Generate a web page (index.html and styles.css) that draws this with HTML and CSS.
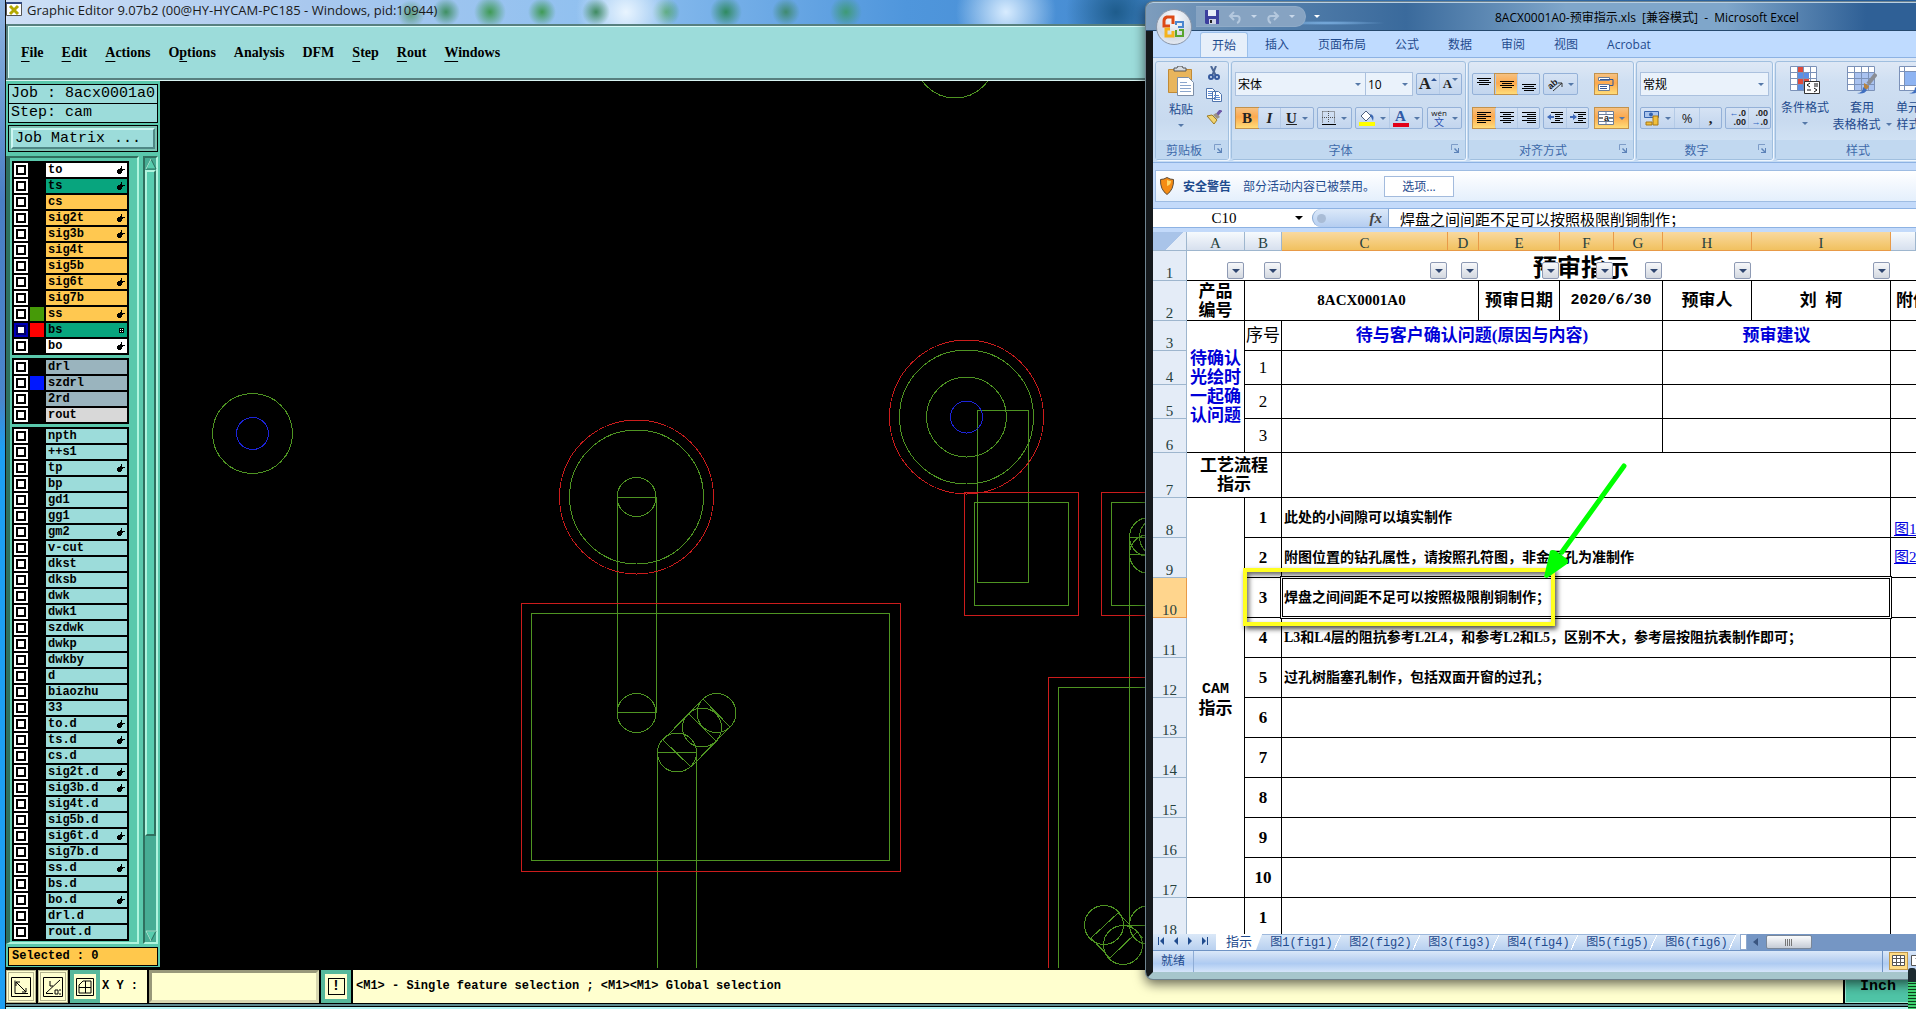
FILE: index.html
```html
<!DOCTYPE html>
<html lang="zh-CN">
<head>
    <meta charset="UTF-8">
    <meta name="viewport" content="width=device-width, initial-scale=1.0">
    <title>Graphic Editor</title>
    <link rel="stylesheet" href="styles.css">
</head>
<body>
    <svg class="defs" width="0" height="0">
        <symbol id="hand" viewBox="0 0 8 8"><path d="M0 4h1v-1h2v-1h1v-2h1v3h3v1h-2v1h-1v2h-1v1h-3v-1h-1z"/></symbol>
        <symbol id="grid" viewBox="0 0 8 8"><path fill="#fff" d="M2 2h5v5h-5z"/><path fill="none" stroke="#000" d="M2.500 2.500h4v4h-4zM4.500 2v5M2 4.500h5"/></symbol>
        <symbol id="launch" viewBox="0 0 9 9"><path fill="none" stroke="#7d9cc8" d="M.5 6V.5H7"/><path fill="#5d83b8" d="M4 4l3 3V4h1v5H3V8h3L3 5z"/></symbol>
    </svg>

    <div class="editor">
        <header class="editor-title">
            <svg width="16" height="16" viewBox="0 0 16 16"><path fill="#fff" stroke="#555" d="M.5.5h15v13H.5z"/><path fill="#334a80" d="M0 0h16v2H0z"/><path stroke="#b3a800" stroke-width="3" d="M4 4l8 8M12 4l-8 8"/></svg>
            <span>Graphic Editor 9.07b2 (00@HY-HYCAM-PC185 - Windows, pid:10944)</span>
        </header>
        <nav class="menubar">
            <button><u>F</u>ile</button>
            <button><u>E</u>dit</button>
            <button><u>A</u>ctions</button>
            <button>O<u>p</u>tions</button>
            <button>Analysis</button>
            <button>DFM</button>
            <button><u>S</u>tep</button>
            <button><u>R</u>out</button>
            <button><u>W</u>indows</button>
        </nav>
        <div class="workspace">
            <aside class="sidebar">
                <div class="job-info">
                    <div>Job : 8acx0001a0</div>
                    <div>Step: cam</div>
                </div>
                <div class="matrix"><button>Job Matrix ...</button></div>
                <div class="layer-panel">
                    <div class="layers" id="layers"></div>
                    <div class="scrollbar">
                        <svg width="12" height="12" viewBox="0 0 12 12"><path fill="#58cdae" stroke="#2b6c5c" d="M6 1l5 10H1z"/><path stroke="#b0f4de" d="M6 1L1 11"/></svg>
                        <div class="thumb"></div>
                        <svg width="12" height="12" viewBox="0 0 12 12"><path fill="#58cdae" stroke="#2b6c5c" d="M1 1h10L6 11z"/><path stroke="#b0f4de" d="M1 1h10M1 1l5 10"/></svg>
                    </div>
                </div>
                <div class="selected">Selected : 0</div>
            </aside>
            <main class="canvas">
                <svg width="100%" height="100%">
                    <g transform="translate(-160 -82)" fill="none" shape-rendering="crispEdges">
                        <g class="green">
                            <circle cx="955" cy="59" r="40"/>
                            <circle cx="252.5" cy="434.5" r="40"/>
                            <circle cx="636.5" cy="498" r="67"/>
                            <circle cx="636.5" cy="498" r="19.5"/>
                            <circle cx="636.5" cy="714" r="19.5"/>
                            <path d="M617.5 498.5H656.5M617.5 498V714M656.5 498V714M617.5 713.5H656.5"/>
                            <path d="M531.5 614.5H889.5V861.5H531.5z"/>
                            <circle cx="677" cy="753.5" r="19.5"/>
                            <circle cx="702" cy="728.5" r="19.5"/>
                            <circle cx="716.5" cy="714" r="19.5"/>
                            <path d="M657.5 970V753.5H696.5V970M663 741L691 768M688 714L716 742M703 700L730 728M663 741L703 700M691 768L730 728"/>
                            <circle cx="966.5" cy="418" r="67"/>
                            <circle cx="966.5" cy="418" r="40"/>
                            <path d="M977.5 411.5H1028.5V583.5H977.5z"/>
                            <path d="M974.5 503.5H1068.5V606.5H974.5zM1160 503.5H1111.5V606.5H1160"/>
                            <circle cx="1149" cy="538" r="19.5"/>
                            <circle cx="1149" cy="555" r="19.5"/>
                            <circle cx="1159" cy="538" r="19.5"/>
                            <path d="M1129.5 538V930M1129 538.5H1160M1129 555.5H1160"/>
                            <path d="M1160 688.5H1058.5V970"/>
                            <circle cx="1104" cy="926" r="19.5"/>
                            <circle cx="1123" cy="946" r="19.5"/>
                            <circle cx="1149" cy="926" r="19.5"/>
                            <path d="M1091 939L1118 914M1110 959L1137 933M1091 939L1110 959M1118 914L1143 939M1123 926.5H1160"/>
                        </g>
                        <g class="red">
                            <circle cx="636.5" cy="498" r="77"/>
                            <circle cx="966.5" cy="418" r="77"/>
                            <path d="M521.5 604.5H900.5V872.5H521.5z"/>
                            <path d="M964.5 493.5H1078.5V616.5H964.5zM1160 493.5H1101.5V616.5H1160M1160 678.5H1048.5V970"/>
                        </g>
                        <g class="blue">
                            <circle cx="252.5" cy="434.5" r="16"/>
                            <circle cx="966.5" cy="418" r="16"/>
                        </g>
                    </g>
                </svg>
            </main>
        </div>
        <footer class="command-bar">
            <button class="tool" aria-label="Zoom">
                <svg width="20" height="20" viewBox="0 0 20 20"><path d="M.5.5h19v19H.5zM4 3.500V16.500H17M5 5L15 15M5 9V5h4M15 11v4h-4"/></svg>
            </button>
            <button class="tool" aria-label="Angle">
                <svg width="20" height="20" viewBox="0 0 20 20"><path d="M.5.5h19v19H.5zM3 16.500H10M3 16L17 3M7 4v5h3M12 13h3v4h-3zM16 17h2M16 13h2"/></svg>
            </button>
            <button class="tool on" aria-label="Grid">
                <svg width="18" height="18" viewBox="0 0 18 18"><path d="M.5.5h17v17H.5zM3 7L7 3h8v12H3zM3 9.500h12M9.500 3v12"/></svg>
            </button>
            <label for="xy">X Y :</label>
            <input type="text" id="xy">
            <button class="tool on bang" aria-label="Alert"><span>!</span></button>
            <div class="hint">&lt;M1&gt; - Single feature selection ; &lt;M1&gt;&lt;M1&gt; Global selection</div>
            <button class="unit">Inch</button>
        </footer>
    </div>

    <section class="excel">
        <header class="excel-title">
            <div class="quick">
                <svg width="14" height="14" viewBox="0 0 14 14"><path fill="#3c3f9e" d="M0 0h14v14H1l-1-1z"/><path fill="#e9edf8" d="M3 0h8v6H3z"/><path fill="#cfd4e6" d="M4 9h7v5H4z"/><path fill="#222" d="M5 10h2v3H5z"/></svg>
                <svg width="14" height="14" viewBox="0 0 14 14"><path fill="none" stroke="#b4c8de" stroke-width="2" d="M2 6h7c4 0 3 6 0 7M6 2L2 6l4 4"/></svg>
                <i class="caret pale"></i>
                <svg width="14" height="14" viewBox="0 0 14 14"><path fill="none" stroke="#b4c8de" stroke-width="2" d="M12 6H5c-4 0-3 6 0 7M8 2l4 4-4 4"/></svg>
                <i class="caret pale"></i>
            </div>
            <i class="caret white"></i>
            <h1>8ACX0001A0-预审指示.xls&nbsp; [兼容模式] &nbsp;- &nbsp;Microsoft Excel</h1>
        </header>
        <button class="office" aria-label="Office">
            <svg width="24" height="24" viewBox="0 0 24 24" fill="none" stroke-width="3">
                <path stroke="#dd4a16" d="M11 9V2H5Q2 3 2 6v5h6"/>
                <path stroke="#4b86cf" stroke-width="2" d="M14 10V7h7v5h-5"/>
                <path stroke="#f5b31c" d="M8 14H4v7h7v-5"/>
                <path stroke="#58a52f" stroke-width="2" d="M14 15v6h7v-6h-4"/>
            </svg>
        </button>

        <nav class="ribbon-tabs">
            <button class="active">开始</button>
            <button>插入</button>
            <button>页面布局</button>
            <button>公式</button>
            <button>数据</button>
            <button>审阅</button>
            <button>视图</button>
            <button>Acrobat</button>
        </nav>

        <div class="ribbon">
            <div class="group clipboard">
                <div class="tools">
                    <button class="big">
                        <svg width="26" height="30" viewBox="0 0 26 30"><path fill="#e8b55c" stroke="#c18a35" d="M.5 3.500h23v23h-23z"/><path fill="#d7dce2" stroke="#555" d="M6 5V2h3l1-2h4l1 2h3v3z"/><path fill="#fff" stroke="#7d8fa8" d="M9.500 11.500h11l5 5v13h-16z"/><path stroke="#8ca6cc" d="M12 16.500h7M12 19.500h11M12 22.500h11M12 25.500h11"/></svg>
                        <span>粘贴</span>
                        <i class="caret"></i>
                    </button>
                    <div class="small-tools">
                        <button aria-label="剪切"><svg width="14" height="15" viewBox="0 0 14 15"><path fill="none" stroke="#4d6897" stroke-width="2" d="M4 0l5 10M9 0L5 10"/><circle cx="4" cy="11" r="2" fill="none" stroke="#35599d" stroke-width="2"/><circle cx="10" cy="11" r="2" fill="none" stroke="#35599d" stroke-width="2"/></svg></button>
                        <button aria-label="复制"><svg width="16" height="14" viewBox="0 0 16 14"><path fill="#fff" stroke="#4f74ad" d="M.5.5h6l3 3v7h-9zM6.500 3.500h6l3 3v7h-9z"/><path stroke="#5f8bd0" d="M2 3.500h4M2 5.500h4M2 7.500h4M8 7.500h5M8 9.500h6M8 11.500h6"/></svg></button>
                        <button aria-label="格式刷"><svg width="16" height="15" viewBox="0 0 16 15"><path stroke="#6e5aa6" stroke-width="3" d="M15 0l-4 5"/><path fill="#9c9284" d="M7 5l3-2 4 4-3 2z"/><path fill="#f1d470" stroke="#9f7c22" d="M1 6l5-1 5 5-3 4z"/></svg></button>
                    </div>
                </div>
                <div class="caption">剪贴板<svg width="9" height="9"><use href="#launch"/></svg></div>
            </div>

            <div class="group font">
                <div class="tools rows">
                    <div class="row">
                        <label class="combo face"><select aria-label="字体"><option>宋体</option></select></label>
                        <label class="combo size"><select aria-label="字号"><option>10</option></select></label>
                        <div class="set end">
                            <button class="serif grow">A<i class="up"></i></button>
                            <button class="serif shrink">A<i class="caret"></i></button>
                        </div>
                    </div>
                    <div class="row">
                        <div class="set">
                            <button class="serif on">B</button>
                            <button class="serif italic">I</button>
                            <button class="serif wide"><u>U</u><i class="caret"></i></button>
                        </div>
                        <div class="set">
                            <button class="wide"><svg width="14" height="14" viewBox="0 0 14 14"><path fill="none" stroke="#555" stroke-dasharray="1 1" d="M.5.5h12v12M.5.5v12M6.500 0v12M0 6.500h13"/><path stroke="#000" d="M0 13.500h14"/></svg><i class="caret"></i></button>
                        </div>
                        <div class="set">
                            <button class="wide"><svg width="16" height="16" viewBox="0 0 16 16"><path fill="#fff" stroke="#4c5f80" d="M2 6l5-5 5 5-5 5z"/><path fill="#3b68b4" d="M11 4q5 1 3 7l-2-4z"/><path fill="#ffff00" d="M0 12h16v4H0z"/></svg><i class="caret"></i></button>
                            <button class="wide"><span class="font-color">A</span><i class="caret"></i></button>
                        </div>
                        <div class="set end">
                            <button class="wide"><span class="pinyin"><small>wén</small><span>文</span></span><i class="caret"></i></button>
                        </div>
                    </div>
                </div>
                <div class="caption">字体<svg width="9" height="9"><use href="#launch"/></svg></div>
            </div>

            <div class="group align">
                <div class="tools rows">
                    <div class="row">
                        <div class="set">
                            <button aria-label="顶端对齐"><svg width="14" height="14" viewBox="0 0 14 14"><path stroke="#000" d="M0 1.500h14M2 3.500h10M0 5.500h14M2 7.500h10"/></svg></button>
                            <button class="on" aria-label="垂直居中"><svg width="14" height="14" viewBox="0 0 14 14"><path stroke="#000" d="M0 4.500h14M2 6.500h10M0 8.500h14M2 10.500h10"/></svg></button>
                            <button aria-label="底端对齐"><svg width="14" height="14" viewBox="0 0 14 14"><path stroke="#000" d="M0 7.500h14M2 9.500h10M0 11.500h14M2 13.500h10"/></svg></button>
                        </div>
                        <div class="set">
                            <button class="wide" aria-label="方向"><svg width="15" height="15" viewBox="0 0 15 15"><text x="0" y="10" class="ab" transform="rotate(-40 5 8)">ab</text><path fill="none" stroke="#333" d="M5 14l9-8M10 6h4v4"/></svg><i class="caret"></i></button>
                        </div>
                        <div class="set alone">
                            <button class="on" aria-label="自动换行"><svg width="16" height="16" viewBox="0 0 16 16"><path fill="#fff" stroke="#6c7d98" d="M.5 1.500h11v3H.5zM.5 8.500h11v6H.5z"/><path fill="none" stroke="#2f5597" d="M2 3.500h13v6h-4M2 10.500h7M2 12.500h7"/></svg></button>
                        </div>
                    </div>
                    <div class="row">
                        <div class="set">
                            <button class="on" aria-label="左对齐"><svg width="14" height="14" viewBox="0 0 14 14"><path stroke="#000" d="M0 1.500h14M0 3.500h9M0 5.500h14M0 7.500h9M0 9.500h14M0 11.500h9"/></svg></button>
                            <button aria-label="居中"><svg width="14" height="14" viewBox="0 0 14 14"><path stroke="#000" d="M0 1.500h14M3 3.500h8M0 5.500h14M3 7.500h8M0 9.500h14M3 11.500h8"/></svg></button>
                            <button aria-label="右对齐"><svg width="14" height="14" viewBox="0 0 14 14"><path stroke="#000" d="M0 1.500h14M5 3.500h9M0 5.500h14M5 7.500h9M0 9.500h14M5 11.500h9"/></svg></button>
                        </div>
                        <div class="set">
                            <button aria-label="减少缩进"><svg width="16" height="14" viewBox="0 0 16 14"><path stroke="#000" d="M4 1.500h12M8 3.500h8M8 5.500h5M8 7.500h8M8 9.500h5M4 11.500h12"/><path fill="#3f69b8" d="M0 6l4-3v2h3v2H4v2z"/></svg></button>
                            <button aria-label="增加缩进"><svg width="16" height="14" viewBox="0 0 16 14"><path stroke="#000" d="M4 1.500h12M8 3.500h8M8 5.500h5M8 7.500h8M8 9.500h5M4 11.500h12"/><path fill="#3f69b8" d="M7 6L3 3v2H0v2h3v2z"/></svg></button>
                        </div>
                        <div class="set alone">
                            <button class="on wide" aria-label="合并后居中"><svg width="16" height="14" viewBox="0 0 16 14"><path fill="#fff" stroke="#6c7d98" d="M.5.5h15v13H.5zM0 3.500h16M0 10.500h16M8 0v4M8 10v4"/><path stroke="#000" d="M1 7h4M11 7h4"/><text x="6" y="10" class="ab">a</text></svg><i class="caret"></i></button>
                        </div>
                    </div>
                </div>
                <div class="caption">对齐方式<svg width="9" height="9"><use href="#launch"/></svg></div>
            </div>

            <div class="group number">
                <div class="tools rows">
                    <div class="row">
                        <label class="combo format"><select aria-label="数字格式"><option>常规</option></select></label>
                    </div>
                    <div class="row">
                        <div class="set">
                            <button class="wide" aria-label="会计数字格式"><svg width="16" height="16" viewBox="0 0 16 16"><path fill="#a9c4ec" stroke="#3563ad" d="M.5 1.500h14v6H.5z"/><circle cx="7" cy="4.500" r="2" fill="#3563ad"/><path fill="#f0bf3c" stroke="#a97812" d="M9 6h5v9H9zM2 12h6v3H2z"/></svg><i class="caret"></i></button>
                            <button class="percent">%</button>
                            <button class="serif">,</button>
                        </div>
                        <div class="set end">
                            <button class="decimals"><span><b>←</b>.0</span><span>.00</span></button>
                            <button class="decimals"><span>.00</span><span><b>→</b>.0</span></button>
                        </div>
                    </div>
                </div>
                <div class="caption">数字<svg width="9" height="9"><use href="#launch"/></svg></div>
            </div>

            <div class="group styles">
                <div class="tools">
                    <button class="big">
                        <svg width="30" height="28" viewBox="0 0 30 28"><path fill="#fff" d="M0 0h27v24H0z"/><path fill="#e04a3c" d="M7 0h7v6H7zM7 12h12v6H7z"/><path fill="#5b8fe6" d="M7 6h12v6H7zM7 18h7v6H7z"/><path fill="none" stroke="#7b91b8" d="M.5.5h26v24H.5zM0 6.500h27M0 12.500h27M0 18.500h27M7.500 0v24M13.500 0v24M20.500 0v24"/><path fill="#fff" stroke="#333" d="M14.500 15.500h15v12h-15z"/><path fill="none" stroke="#111" d="M20 17l-3 2 3 2M17 24h4M24 18h4M24 20h4M24 22l3 2-3 2"/></svg>
                        <span>条件格式</span>
                        <i class="caret"></i>
                    </button>
                    <button class="big table-style">
                        <svg width="30" height="28" viewBox="0 0 30 28"><path fill="#fff" d="M0 0h28v24H0z"/><path fill="#a9c2f0" d="M7 6h21v18H7z"/><path fill="none" stroke="#7b91b8" d="M.5.5h27v24H.5zM0 6.500h28M0 12.500h28M0 18.500h28M7.500 0v24M14.500 0v24M21.500 0v24"/><path stroke="#8a8d94" stroke-width="4" d="M29 8l-8 10"/><path fill="#b98440" d="M17 17l5 3q-1 4-5 4z"/><path fill="#3f6fc0" d="M10 27q6 0 6-6l4 3q-3 5-10 3z"/></svg>
                        <span>套用</span>
                        <span class="second">表格格式<i class="caret"></i></span>
                    </button>
                    <button class="big cell-style">
                        <svg width="30" height="28" viewBox="0 0 30 28"><path fill="#fff" stroke="#7b91b8" d="M.5.5h29v24H.5z"/><path fill="#8eb4f2" d="M6 6h24v13H6z"/><path stroke="#7b91b8" d="M0 5.500h30M5.500 0v24M0 19.500h30"/><path fill="#3f6fc0" d="M10 27q6 0 6-6l4 3q-3 5-10 3z"/></svg>
                        <span>单元格</span>
                        <span class="second">样式<i class="caret"></i></span>
                    </button>
                </div>
                <div class="caption">样式</div>
            </div>
        </div>

        <div class="warning">
            <svg width="14" height="18" viewBox="0 0 14 18"><path fill="#f58c14" stroke="#5c4a36" d="M7 .5q3 2 6.500 2 .5 10-6.500 15Q0 12.500.5 2.500q3.500 0 6.500-2z"/><path fill="#ffd766" d="M7 3q2 1 4 1 0 4-4 5z"/></svg>
            <strong>安全警告</strong>
            <span>部分活动内容已被禁用。</span>
            <button>选项...</button>
        </div>

        <div class="formula-bar">
            <div class="name-box"><span>C10</span><i class="caret"></i></div>
            <div class="fx"><i class="knob"></i><em>fx</em></div>
            <input type="text" aria-label="编辑栏" value="焊盘之间间距不足可以按照极限削铜制作；">
        </div>

        <div class="sheet">
            <table>
                <colgroup>
                    <col class="w-head"><col class="w-a"><col class="w-b"><col class="w-c"><col class="w-d"><col class="w-e">
                    <col class="w-f"><col class="w-g"><col class="w-h"><col class="w-i"><col>
                </colgroup>
                <thead>
                    <tr>
                        <th class="corner"></th><th>A</th><th>B</th><th class="hot">C</th><th class="hot">D</th><th class="hot">E</th>
                        <th class="hot">F</th><th class="hot">G</th><th class="hot">H</th><th class="hot">I</th><th></th>
                    </tr>
                </thead>
                <tbody>
                    <tr class="r30 filters">
                        <th>1</th>
                        <td><button aria-label="筛选 A"></button></td>
                        <td><button aria-label="筛选 B"></button></td>
                        <td><button aria-label="筛选 C"></button></td>
                        <td><button aria-label="筛选 D"></button></td>
                        <td><span class="sheet-title">预审指示</span><button aria-label="筛选 E"></button></td>
                        <td><button aria-label="筛选 F"></button></td>
                        <td><button aria-label="筛选 G"></button></td>
                        <td><button aria-label="筛选 H"></button></td>
                        <td><button aria-label="筛选 I"></button></td>
                        <td></td>
                    </tr>
                    <tr class="r40 bold">
                        <th>2</th>
                        <td>产品<br>编号</td>
                        <td colspan="3" class="code">8ACX0001A0</td>
                        <td>预审日期</td>
                        <td colspan="2" class="date">2020/6/30</td>
                        <td>预审人</td>
                        <td>刘 &nbsp;柯</td>
                        <td class="left">附件</td>
                    </tr>
                    <tr class="r30">
                        <th>3</th>
                        <td rowspan="4" class="blue">待确认<br>光绘时<br>一起确<br>认问题</td>
                        <td>序号</td>
                        <td colspan="5" class="blue">待与客户确认问题(原因与内容)</td>
                        <td colspan="2" class="blue">预审建议</td>
                        <td></td>
                    </tr>
                    <tr class="r34"><th>4</th><td>1</td><td colspan="5"></td><td colspan="2"></td><td></td></tr>
                    <tr class="r34"><th>5</th><td>2</td><td colspan="5"></td><td colspan="2"></td><td></td></tr>
                    <tr class="r34"><th>6</th><td>3</td><td colspan="5"></td><td colspan="2"></td><td></td></tr>
                    <tr class="r45 bold"><th>7</th><td colspan="2">工艺流程<br>指示</td><td colspan="7"></td><td></td></tr>
                    <tr class="r40 bold">
                        <th>8</th>
                        <td rowspan="10"><span class="cam">CAM</span><br>指示</td>
                        <td>1</td>
                        <td colspan="7" class="note">此处的小间隙可以填实制作</td>
                        <td class="link low"><a href="#fig1">图1</a></td>
                    </tr>
                    <tr class="r40 bold"><th>9</th><td>2</td><td colspan="7" class="note">附图位置的钻孔属性，请按照孔符图，非金属孔为准制作</td><td class="link"><a href="#fig2">图2</a></td></tr>
                    <tr class="r40 bold"><th class="hot">10</th><td>3</td><td colspan="7" class="note current">焊盘之间间距不足可以按照极限削铜制作；</td><td></td></tr>
                    <tr class="r40 bold"><th>11</th><td>4</td><td colspan="7" class="note">L3和L4层的阻抗参考L2L4，和参考L2和L5，区别不大，参考层按阻抗表制作即可；</td><td></td></tr>
                    <tr class="r40 bold"><th>12</th><td>5</td><td colspan="7" class="note">过孔树脂塞孔制作，包括双面开窗的过孔；</td><td></td></tr>
                    <tr class="r40 bold"><th>13</th><td>6</td><td colspan="7"></td><td></td></tr>
                    <tr class="r40 bold"><th>14</th><td>7</td><td colspan="7"></td><td></td></tr>
                    <tr class="r40 bold"><th>15</th><td>8</td><td colspan="7"></td><td></td></tr>
                    <tr class="r40 bold"><th>16</th><td>9</td><td colspan="7"></td><td></td></tr>
                    <tr class="r40 bold"><th>17</th><td>10</td><td colspan="7"></td><td></td></tr>
                    <tr class="r40 bold"><th>18</th><td></td><td>1</td><td colspan="7"></td><td></td></tr>
                </tbody>
            </table>
        </div>

        <div class="sheet-tabs">
            <div class="tab-nav">
                <svg width="56" height="9" viewBox="0 0 56 9"><path fill="#1f4b8e" d="M1 0h1v8H1zM7 0v8L3 4zM21 0v8L17 4zM31 0v8l4-4zM45 0v8l4-4zM50 0h1v8h-1z"/></svg>
            </div>
            <button class="active">指示</button>
            <button>图1(fig1)</button>
            <button>图2(fig2)</button>
            <button>图3(fig3)</button>
            <button>图4(fig4)</button>
            <button>图5(fig5)</button>
            <button>图6(fig6)</button>
            <div class="splitter"></div>
            <div class="h-track">
                <i class="arrow-left"></i>
                <div class="h-thumb"><svg width="8" height="7" viewBox="0 0 8 7"><path stroke="#777" d="M.5 0v7M2.500 0v7M4.500 0v7M6.500 0v7"/></svg></div>
            </div>
        </div>
        <div class="status">
            <span>就绪</span>
            <div class="views">
                <button class="on" aria-label="普通"><svg width="13" height="11" viewBox="0 0 13 11"><path fill="#fff" stroke="#555" d="M.5.5h12v10H.5zM0 3.500h13M0 7.500h13M4.500 0v11M8.500 0v11"/></svg></button>
                <button aria-label="页面布局"><svg width="13" height="11" viewBox="0 0 13 11"><path fill="#fff" stroke="#555" d="M.5.5h12v10H.5zM4.500 3.500h5v7"/></svg></button>
            </div>
        </div>
    </section>

    <!-- mark-up drawn over the sheet -->
    <div class="mark-box"></div>
    <svg class="mark-arrow" width="90" height="120" viewBox="0 0 90 120">
        <path stroke="#00ff00" stroke-width="5" stroke-linecap="round" d="M84 6L22 92"/>
        <path fill="#00ff00" d="M4 117L10 91q2-2 6 0l11 8q2 3 0 5L7 118z"/>
    </svg>
    <div class="meter"></div>

    <script>
        // name, tone, swatch, marker
        const groups = [
            [
                ['to', 'white', '', 'hand'], ['ts', 'teal', '', 'hand'], ['cs', 'amber'],
                ['sig2t', 'amber', '', 'hand'], ['sig3b', 'amber', '', 'hand'], ['sig4t', 'amber'],
                ['sig5b', 'amber'], ['sig6t', 'amber', '', 'hand'], ['sig7b', 'amber'],
                ['ss', 'amber', 'green', 'hand'], ['bs', 'teal', 'red', 'grid'], ['bo', 'white', '', 'hand']
            ],
            [
                ['drl', 'slate'], ['szdrl', 'slate', 'blue'], ['2rd', 'slate'], ['rout', 'gray']
            ],
            [
                ['npth'], ['++s1'], ['tp', '', '', 'hand'], ['bp'], ['gd1'], ['gg1'], ['gm2', '', '', 'hand'],
                ['v-cut'], ['dkst'], ['dksb'], ['dwk'], ['dwk1'], ['szdwk'], ['dwkp'], ['dwkby'], ['d'],
                ['biaozhu'], ['33'], ['to.d', '', '', 'hand'], ['ts.d', '', '', 'hand'], ['cs.d'],
                ['sig2t.d', '', '', 'hand'], ['sig3b.d', '', '', 'hand'], ['sig4t.d'], ['sig5b.d'],
                ['sig6t.d', '', '', 'hand'], ['sig7b.d'], ['ss.d', '', '', 'hand'], ['bs.d'],
                ['bo.d', '', '', 'hand'], ['drl.d'], ['rout.d']
            ]
        ];

        document.getElementById('layers').innerHTML = groups.map(group => `
            <div class="layer-group">
                ${group.map(([name, tone = '', swatch = '', marker = '']) => `
                    <label class="layer ${tone && 'tone-' + tone}">
                        <input type="checkbox" ${name === 'bs' ? 'class="work"' : ''}>
                        <i class="${swatch && 'swatch-' + swatch}"></i>
                        <span>${name}${marker ? `<svg width="8" height="8"><use href="#${marker}"/></svg>` : ''}</span>
                    </label>
                `).join('')}
            </div>
        `).join('');
    </script>
</body>
</html>
```
FILE: styles.css
```css
* {
    box-sizing: border-box;
}
body {
    margin: 0;
    height: 100vh;
    overflow: hidden;
    position: relative;
    background: linear-gradient(#8fb4e0 0, #4a7fc4 200px, #4a86cc 400px, #1ea0f4 450px);
    font-family: "Open Sans", "Noto Sans CJK SC", sans-serif;
    font-size: 12px;
}
button {
    font: inherit;
    color: inherit;
    background: none;
    border: 0;
    padding: 0;
    margin: 0;
    cursor: pointer;
}
.defs {
    position: absolute;
}

/* graphic editor */
.editor {
    height: 100%;
    margin-left: 5px;
    display: flex;
    flex-direction: column;
    border-left: 1px solid #111;
    background: #000;
}
.editor-title {
    flex: none;
    height: 24px;
    display: flex;
    align-items: center;
    gap: 5px;
    padding-bottom: 4px;
    font-size: 13px;
    color: #1a1a1a;
    background:
        radial-gradient(circle at 405px 14px, #5f9f80 0, transparent 14px),
        radial-gradient(circle at 440px 12px, #3f8f62 0, transparent 14px),
        radial-gradient(circle at 484px 12px, #3f9a55 0, transparent 16px),
        radial-gradient(circle at 536px 12px, #3f9a55 0, transparent 14px),
        radial-gradient(circle at 590px 12px, #3f8a60 0, transparent 14px),
        radial-gradient(circle at 620px 12px, #e8f4ff 0, transparent 50px),
        radial-gradient(circle at 660px 12px, #3f9a66 0, transparent 14px),
        radial-gradient(circle at 720px 12px, #2f8a60 0, transparent 16px),
        radial-gradient(circle at 780px 12px, #3f8a70 0, transparent 14px),
        radial-gradient(circle at 840px 12px, #3e9a76 0, transparent 16px),
        radial-gradient(circle at 1000px 12px, #d8ecff 0, transparent 50px),
        radial-gradient(circle at 1110px 12px, #1e5c8c 0, transparent 50px),
        linear-gradient(90deg, #cfe0f6, #a9c8ee 300px, #8fc0f0 600px, #4f96dc 900px, #2a68ac);
}
.menubar {
    flex: none;
    height: 56px;
    display: flex;
    align-items: center;
    gap: 18px;
    padding-left: 13px;
    padding-top: 2px;
    background: #9cdcda;
    border: 2px solid #57807f;
    border-right: 0;
    box-shadow: inset 1px 1px 0 #d8fbf8, 0 1px 0 #d8f4f2;
    font: bold 14px "Liberation Serif", serif;
    color: #000;
}
.menubar u {
    text-decoration-thickness: 1px;
    text-underline-offset: 4px;
    text-decoration-skip-ink: none;
}
.workspace {
    flex: 1;
    min-height: 0;
    display: flex;
    margin-top: 1px;
}
.sidebar {
    flex: none;
    width: 154px;
    display: flex;
    flex-direction: column;
    padding: 3px 2px 1px;
    background: #5ac8ac;
    border-bottom: 1px solid #000;
    font-family: "Liberation Mono", monospace;
    color: #000;
}
.job-info {
    border: 1px solid #000;
    background: #9cdcda;
    font-size: 15px;
    line-height: 18px;
}
.job-info div {
    padding-left: 2px;
}
.job-info div + div {
    border-top: 1px solid #000;
}
.matrix {
    margin-top: 2px;
    padding: 2px;
    border: 1px solid #000;
    background: #7cc4b4;
}
.matrix button {
    width: 100%;
    padding-left: 2px;
    text-align: left;
    font-size: 15px;
    line-height: 17px;
    background: #9cdcda;
    border: 2px solid;
    border-color: #cdf6f2 #4f8886 #4f8886 #cdf6f2;
}
.layer-panel {
    flex: 1;
    min-height: 0;
    margin: 4px 0 3px -2px;
    display: flex;
    justify-content: space-between;
}
.layers {
    width: 133px;
    padding: 3px 2px 0 2px;
    overflow: hidden;
    border-left: 4px solid #2f705f;
    border-top: 2px solid #2f705f;
    border-right: 2px solid #b0f4de;
    border-bottom: 2px solid #b0f4de;
}
.layer-group {
    width: 117px;
    display: flex;
    flex-direction: column;
    gap: 2px;
    padding: 2px;
    margin-bottom: 3px;
    background: #000;
}
.layer {
    display: flex;
    gap: 2px;
    height: 14px;
}
.layer input {
    appearance: none;
    flex: none;
    width: 14px;
    height: 14px;
    margin: 0;
    background: #fff;
    border: 2px solid #fff;
    box-shadow: inset 0 0 0 2px #000;
}
.layer input.work {
    border-color: #0000b8;
    box-shadow: inset 0 0 0 2px #000060;
}
.layer i {
    flex: none;
    width: 14px;
}
.layer span {
    flex: 1;
    display: flex;
    align-items: center;
    justify-content: space-between;
    padding: 0 2px;
    font-size: 12px;
    font-weight: bold;
    line-height: 14px;
    background: #9cdcda;
}
.layer svg {
    shape-rendering: crispEdges;
}
.tone-white span { background: #fff; }
.tone-teal span { background: #08a57e; }
.tone-amber span { background: #ffc850; }
.tone-slate span { background: #9ab4be; }
.tone-gray span { background: #d8d8d8; }
.swatch-green { background: #469a08; }
.swatch-red { background: #f00; }
.swatch-blue { background: #0018ff; }
.scrollbar {
    width: 15px;
    display: flex;
    flex-direction: column;
    background: #47ac94;
    border: 2px solid;
    border-color: #2f705f #b0f4de #b0f4de #2f705f;
}
.scrollbar svg {
    flex: none;
}
.thumb {
    width: 11px;
    height: 85%;
    margin-bottom: auto;
    background: #58cdb0;
    border: 2px solid;
    border-color: #b0f4de #2f705f #2f705f #b0f4de;
}
.selected {
    padding-left: 3px;
    font-size: 12px;
    font-weight: bold;
    line-height: 17px;
    background: #ffc84c;
    border: 1px solid #000;
}
.canvas {
    flex: 1;
    overflow: hidden;
    background: #000;
}
.canvas svg {
    display: block;
}
.green { stroke: #4e9422; }
.red { stroke: #cc1c1c; }
.blue { stroke: #1c24d8; }
.command-bar {
    flex: none;
    height: 41px;
    display: flex;
    align-items: stretch;
    gap: 2px;
    padding-bottom: 4px;
    background: #000;
    border-top: 2px solid #000;
    border-bottom: 2px solid #b4f4f4;
    box-shadow: inset 0 -1px 0 #000, inset 0 -3px 0 #5f8a90, inset 0 -4px 0 #000;
    font: bold 12px "Liberation Mono", monospace;
}
.tool {
    width: 30px;
    display: flex;
    align-items: center;
    justify-content: center;
    background: #ffffcf;
    border: 3px double #b6b690;
}
.tool svg {
    fill: none;
    stroke: #000;
}
.tool.on {
    border: 4px solid #58b89c;
}
.command-bar label {
    width: 47px;
    padding-left: 2px;
    margin-left: -2px;
    line-height: 32px;
    white-space: nowrap;
    background: #ffffcf;
}
.command-bar input {
    width: 170px;
    margin: 0;
    background: #ffffcf;
    border: 3px solid;
    border-color: #98987a #d8d8b0 #d8d8b0 #98987a;
}
.bang span {
    width: 17px;
    border: 1px solid #000;
    font-size: 14px;
    line-height: 15px;
}
.hint {
    flex: 1;
    padding-left: 3px;
    line-height: 32px;
    background: #ffffcf;
}
.unit {
    width: 71px;
    padding-left: 14px;
    text-align: left;
    font-size: 15px;
    background: #4fc4a6;
    border: 1px solid #9cecd6;
}

/* excel window */
.excel {
    position: absolute;
    top: 2px;
    right: 0;
    bottom: 30px;
    left: 1146px;
    display: flex;
    flex-direction: column;
    border-left: 7px solid #15191c;
    border-bottom: 7px solid #a6c6cc;
    border-radius: 7px 0 0 7px;
    background: #c3dafa;
    box-shadow: 0 0 0 1px #6f8490, 0 4px 12px 1px rgba(0, 0, 0, 0.6);
    color: #1f4b8e;
}
.caret,
.up {
    flex: none;
    width: 0;
    height: 0;
    border: 3px solid transparent;
    border-top-color: #5578a8;
    border-bottom: 0;
}
.up {
    border-top: 0;
    border-bottom: 3px solid #2f5597;
}
.caret.pale { border-top-color: #c8d8ea; }
.caret.white { border-top-color: #fff; }
.excel-title {
    flex: none;
    height: 29px;
    display: flex;
    align-items: center;
    gap: 8px;
    margin-left: -7px;
    border-radius: 7px 0 0 0;
    border-bottom: 1px solid #26496e;
    border-top: 1px solid #b8cfe2;
    color: #000;
    background:
        radial-gradient(ellipse at 180px 20px, #7fb4e6 0, transparent 60px),
        linear-gradient(90deg, #7e9dbd, #5580ac 120px, #3a6a9c 260px, #7fa6ca 420px, #7fa6ca 580px, #2f6096 720px);
}
.quick {
    display: flex;
    align-items: center;
    gap: 9px;
    height: 21px;
    padding-right: 10px;
    margin-left: 50px;
    padding-left: 9px;
    border: 1px solid #8fabc8;
    border-left: 0;
    border-radius: 0 11px 11px 0;
    background: #86a3c2;
}
.excel-title h1 {
    flex: 1;
    margin: 0;
    padding-left: 167px;
    font-size: 12px;
    font-weight: normal;
    white-space: nowrap;
}
.office {
    position: absolute;
    top: 7px;
    left: 3px;
    width: 36px;
    height: 36px;
    display: flex;
    align-items: center;
    justify-content: center;
    border-radius: 50%;
    border: 1px solid #8a96a8;
    background: radial-gradient(circle at 50% 25%, #fff, #d0d8e4 60%, #f4f6fa);
}
.ribbon-tabs {
    flex: none;
    height: 26px;
    display: flex;
    align-items: flex-end;
    gap: 5px;
    padding-left: 47px;
    background: #bfdbff;
}
.ribbon-tabs button {
    height: 25px;
    padding: 0 12px;
    line-height: 25px;
    white-space: nowrap;
}
.ribbon-tabs .active {
    background: #e6effa;
    border: 1px solid #9cc0ea;
    border-bottom: 0;
    border-radius: 3px 3px 0 0;
    padding: 0 11px;
}
.ribbon {
    flex: none;
    height: 106px;
    display: flex;
    gap: 2px;
    padding: 3px 0 2px 2px;
    overflow: hidden;
    background: linear-gradient(#dde8f6, #c8d9ee 40%, #c6dcf4);
    border-top: 1px solid #8db2e3;
    border-bottom: 1px solid #8db2e3;
}
.group {
    flex: none;
    display: flex;
    flex-direction: column;
    border: 1px solid #a0bfdf;
    border-radius: 3px;
    background: linear-gradient(#dee8f5, #cfdff2 20%, #c8daef 60%, #d8e8f8);
    box-shadow: 1px 1px 0 #eff6fe;
}
.clipboard { width: 74px; }
.font { width: 235px; }
.align { width: 166px; }
.number { width: 137px; }
.styles { width: 182px; }
.tools {
    flex: 1;
    display: flex;
    padding: 4px 4px 0;
}
.tools.rows {
    flex-direction: column;
    gap: 10px;
    padding: 10px 3px 0;
}
.row {
    display: flex;
    align-items: center;
    gap: 3px;
    height: 24px;
}
.caption {
    height: 19px;
    display: flex;
    align-items: center;
    justify-content: center;
    position: relative;
    padding-right: 16px;
    background: #c1d8f0;
    color: #3e6aaa;
}
.caption svg {
    position: absolute;
    right: 5px;
    top: 4px;
}
.big {
    width: 42px;
    display: flex;
    flex-direction: column;
    align-items: center;
    line-height: 17px;
    white-space: nowrap;
}
.big > span:first-of-type {
    margin-top: 5px;
}
.big > .caret {
    margin-top: 6px;
}
.styles .tools {
    padding: 4px 0 0;
}
.styles .big { width: 58px; }
.styles .table-style { width: 56px; }
.styles .cell-style { width: 48px; }
.second {
    display: flex;
    align-items: center;
    gap: 5px;
}
.small-tools {
    display: flex;
    flex-direction: column;
    gap: 7px;
    margin-left: 4px;
}
.small-tools button {
    width: 16px;
    height: 15px;
}
.combo {
    display: flex;
    align-items: center;
    position: relative;
    height: 24px;
    background: #eaf2fb;
    border: 1px solid #abc1de;
}
.combo::after {
    content: "";
    position: absolute;
    right: 4px;
    border: 3px solid transparent;
    border-top-color: #5578a8;
    border-bottom: 0;
}
.combo select {
    appearance: none;
    width: 100%;
    margin: 0;
    padding: 0 2px;
    border: 0;
    background: none;
    font: 12px "Open Sans", "Noto Sans CJK SC", sans-serif;
    color: #000;
}
.face { width: 131px; }
.size { width: 48px; margin-left: -4px; }
.format { width: 129px; }
.set {
    display: flex;
    height: 22px;
    border: 1px solid #94b1d8;
    border-radius: 2px;
    background: linear-gradient(#d6e3f4, #c2d5ee);
    color: #222;
}
.set.end,
.set.alone {
    margin-left: auto;
}
.set.alone {
    margin-right: auto;
}
.set button {
    display: flex;
    align-items: center;
    justify-content: center;
    width: 22px;
}
.set button + button {
    border-left: 1px solid #b4cae6;
}
.set button.wide {
    width: 33px;
    gap: 5px;
}
.set .on {
    background: linear-gradient(#f6c180, #fca94e 45%, #ffdc78);
    box-shadow: 0 0 0 1px #c2924c;
}
.serif {
    font: bold 15px "Liberation Serif", serif;
}
.italic {
    font-style: italic;
}
.grow {
    font-size: 17px;
}
.shrink {
    font-size: 13px;
}
.grow i,
.shrink i {
    margin-bottom: 10px;
}
.font-color {
    width: 16px;
    font: bold 15px "Liberation Serif", serif;
    line-height: 13px;
    color: #2f5aa6;
    border-bottom: 4px solid #e2001a;
}
.pinyin {
    display: flex;
    flex-direction: column;
    align-items: center;
    font-size: 10px;
    line-height: 11px;
    color: #2a4fb0;
}
.pinyin small {
    font-size: 8px;
    line-height: 9px;
    color: #111;
}
.ab {
    font: bold 9px "Liberation Sans", sans-serif;
    fill: #222;
}
.set svg {
    overflow: visible;
}
.set .percent {
    width: 25px;
    font-size: 13px;
}
.set .decimals {
    flex-direction: column;
    align-items: flex-end;
    padding-right: 2px;
    font: bold 9px "Liberation Sans", sans-serif;
    line-height: 9px;
}
.decimals b {
    color: #2f66c4;
}
.warning {
    flex: none;
    height: 32px;
    display: flex;
    align-items: center;
    gap: 9px;
    margin: 7px 0 6px 2px;
    padding-left: 4px;
    border: 1px solid #9ebce2;
    border-right: 0;
    background: linear-gradient(#fff, #e4effc);
}
.warning strong {
    margin-right: 3px;
}
.warning button {
    width: 70px;
    height: 21px;
    border: 1px solid #a3bbdd;
    background: #fff;
}
.formula-bar {
    flex: none;
    height: 20px;
    display: flex;
    margin-bottom: 4px;
    background: #fff;
    border-top: 1px solid #8db2e3;
    border-bottom: 1px solid #8db2e3;
    color: #000;
    font: 15px "Liberation Serif", "Noto Sans CJK SC", serif;
}
.name-box {
    width: 159px;
    display: flex;
    align-items: center;
    padding-right: 9px;
}
.name-box span {
    flex: 1;
    text-align: center;
}
.name-box .caret {
    border-width: 4px 4px 0;
    border-top-color: #000;
}
.fx {
    width: 77px;
    display: flex;
    align-items: center;
    justify-content: space-between;
    padding: 0 6px 0 4px;
    background: linear-gradient(#dce9f9, #b4cdf0);
    border: 1px solid #86a6d0;
    border-width: 0 1px;
    border-radius: 9px 0 0 9px;
    color: #444;
    font-weight: bold;
}
.knob {
    width: 9px;
    height: 9px;
    border-radius: 50%;
    background: #a9bcd6;
}
.formula-bar input {
    flex: 1;
    min-width: 0;
    border: 0;
    margin: 0;
    padding: 0 0 0 11px;
    font: inherit;
    background: #fff;
}

/* worksheet */
.sheet {
    flex: 1;
    min-height: 0;
    overflow: hidden;
    background: #fff;
}
.sheet table {
    width: 100%;
    table-layout: fixed;
    border-collapse: separate;
    border-spacing: 0;
    color: #000;
    font: 17px "Liberation Serif", "Noto Sans CJK SC", serif;
    line-height: 19px;
}
.w-head { width: 34px; }
.w-a { width: 58px; }
.w-b { width: 37px; }
.w-c { width: 166px; }
.w-d { width: 31px; }
.w-e { width: 81px; }
.w-f { width: 54px; }
.w-g { width: 49px; }
.w-h { width: 89px; }
.w-i { width: 139px; }
.sheet th {
    padding: 0;
    vertical-align: bottom;
    font-size: 15px;
    font-weight: normal;
    line-height: 14px;
    color: #27413e;
    background: #e4ecf7;
    border-right: 1px solid #9eb6ce;
    border-bottom: 1px solid #9eb6ce;
}
.sheet thead th {
    height: 19px;
    background: linear-gradient(#f6fafd, #d7e0ee);
}
.sheet th.corner {
    background: linear-gradient(135deg, #a9c4e9 60%, #e4ecf7 60%);
}
.sheet thead th.hot {
    background: linear-gradient(#f9d99f, #f1c15f);
    border-color: #e89a48;
}
.sheet tbody th.hot {
    background: #ffd58d;
    border-color: #e89a48;
}
.sheet td {
    position: relative;
    padding: 0;
    text-align: center;
    vertical-align: middle;
    white-space: nowrap;
    overflow: visible;
    border-right: 1px solid #000;
    border-bottom: 1px solid #000;
}
.sheet td:last-child {
    border-right: 0;
}
.r30 { height: 30px; }
.r34 { height: 34px; }
.r40 { height: 40px; }
.r45 { height: 45px; }
.bold td,
.sheet td.blue {
    font-weight: bold;
}
.sheet td.blue {
    color: #0000d8;
}
.sheet td.code {
    font-size: 15px;
}
.sheet td.date,
.cam {
    font-family: "Liberation Mono", monospace;
    font-size: 15px;
}
.sheet td.left {
    text-align: left;
    padding-left: 5px;
}
.sheet td.note {
    padding-left: 2px;
    text-align: left;
    font-size: 14px;
}
.sheet td.link {
    padding-left: 3px;
    text-align: left;
    font-weight: normal;
    font-size: 15px;
}
.sheet td.low {
    vertical-align: bottom;
    line-height: 16px;
}
.link a {
    color: #0000e0;
}
.filters td {
    border-right: 0;
    text-align: right;
    vertical-align: bottom;
}
.filters button {
    position: relative;
    display: flex;
    align-items: center;
    justify-content: center;
    width: 17px;
    height: 17px;
    margin: 0 1px 1px auto;
    border: 1px solid #8e9ab4;
    border-radius: 2px;
    background: linear-gradient(#f7f8fa, #d3d8e0);
    z-index: 1;
}
.filters button::after {
    content: "";
    border: 4px solid transparent;
    border-top-color: #2f4670;
    border-bottom: 0;
}
.sheet-title {
    position: absolute;
    left: 54px;
    bottom: 0;
    font-size: 24px;
    font-weight: bold;
    line-height: 24px;
}
.current::after {
    content: "";
    position: absolute;
    inset: -2px;
    border: 1px solid #000;
    box-shadow: inset 0 0 0 1px #fff, inset 0 0 0 2px #000;
}
.sheet-tabs {
    flex: none;
    height: 17px;
    display: flex;
    border-bottom: 1px solid #6f93c4;
    background: linear-gradient(#dbe8f8, #b8d0f0);
    font: 12px "Liberation Mono", "Noto Sans CJK SC", monospace;
    line-height: 16px;
}
.tab-nav {
    width: 63px;
    padding: 3px 4px 0;
    line-height: 9px;
}
.sheet-tabs button {
    flex: none;
    width: 79px;
    border-top: 1px solid #9db8dc;
    background: linear-gradient(115deg, transparent 71px, #fff 71px, #fff 72px, transparent 72px);
    line-height: 16px;
    white-space: nowrap;
}
.sheet-tabs button.active {
    width: 46px;
    border-top-color: #fff;
    background: #fff;
    font-size: 13px;
    clip-path: polygon(0 0, 100% 0, 40px 100%, 0 100%);
}
.splitter {
    width: 7px;
    margin-left: 4px;
    background: #fff;
    border: 1px solid #8ea9cf;
}
.h-track {
    flex: 1;
    display: flex;
    align-items: center;
    background: #7596c4;
    overflow: hidden;
}
.arrow-left {
    margin: 0 8px 0 6px;
    border: 4px solid transparent;
    border-right: 5px solid #3a5580;
    border-left: 0;
}
.h-thumb {
    width: 46px;
    height: 14px;
    display: flex;
    align-items: center;
    justify-content: center;
    border: 1px solid #7a8798;
    border-radius: 2px;
    background: linear-gradient(#fbfcfd, #c6ccd6);
}
.status {
    flex: none;
    height: 21px;
    display: flex;
    justify-content: space-between;
    background: linear-gradient(#dbe8f9, #bdd3f2 40%, #aecbf2 60%, #d5e5fa);
    line-height: 20px;
}
.status span {
    width: 41px;
    text-align: center;
    border-right: 1px solid #8fadd6;
}
.views {
    width: 34px;
    display: flex;
    padding: 1px 0 0 6px;
    border-left: 1px solid #6f93c4;
    overflow: hidden;
}
.views button {
    flex: none;
    width: 19px;
    height: 18px;
    line-height: 10px;
}
.views .on {
    background: #ffdc84;
    border: 1px solid #c29a4c;
}

/* overlays */
.mark-box {
    position: absolute;
    top: 568px;
    left: 1243px;
    width: 312px;
    height: 58px;
    border: 4px solid #ffff20;
    box-shadow: 2px 3px 5px rgba(0, 0, 0, 0.7), inset 2px 3px 5px rgba(0, 0, 0, 0.6);
}
.mark-arrow {
    position: absolute;
    top: 460px;
    left: 1540px;
}
.meter {
    position: absolute;
    right: 0;
    bottom: 0;
    width: 8px;
    height: 41px;
    border-radius: 3px 3px 0 0;
    background: linear-gradient(#1c2a30 14px, transparent 14px), repeating-linear-gradient(#0c3c1c 0 1px, #3fd070 1px 3px);
}
```
